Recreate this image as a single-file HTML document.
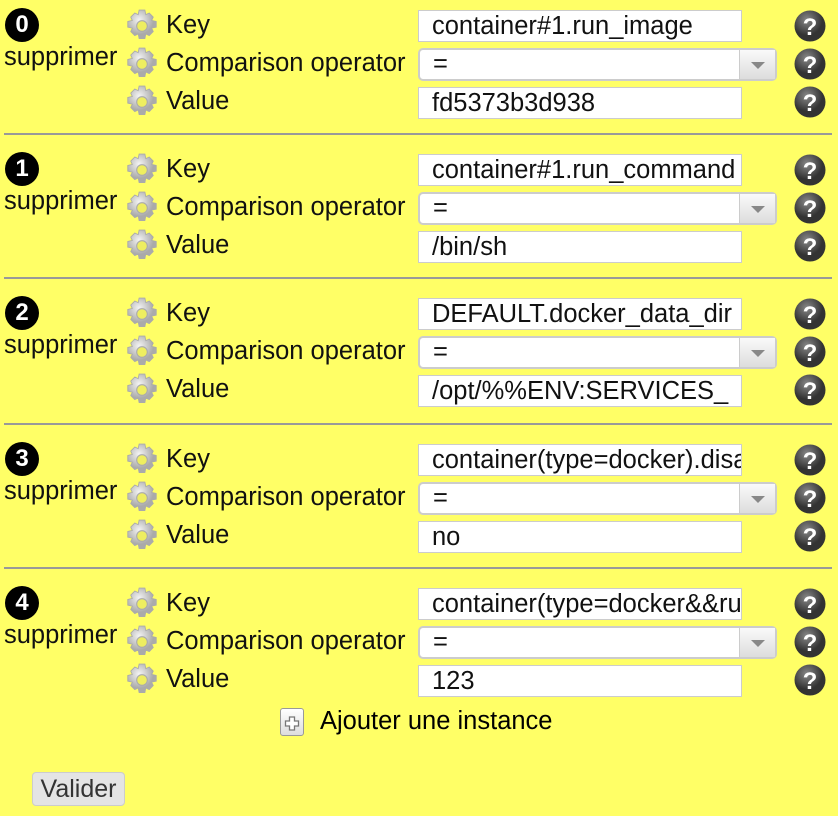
<!DOCTYPE html>
<html><head><meta charset="utf-8"><style>
body{margin:0;width:838px;height:816px;background:#ffff66;font-family:"Liberation Sans",Arial,sans-serif;position:relative;overflow:hidden;color:#111}
.a{position:absolute}
.num{width:34px;height:34px;border-radius:50%;background:#000;color:#fff;font-weight:bold;font-size:24px;text-align:center;line-height:34px;left:5px}
.sup{left:4px;font-size:25.5px}
.lbl{left:166px;font-size:25.5px;line-height:30px}
.inp{left:418px;width:324px;height:32px;background:#fff;border:1px solid #ccc;font-size:25.5px;line-height:31px;padding-left:13px;box-sizing:border-box;white-space:nowrap;overflow:hidden}
.sel{left:418px;width:359px;height:33px;background:#fff;border:2px solid #ccc;border-radius:5px;box-sizing:border-box;font-size:25.5px;line-height:28px;padding-left:13px}
.sel:after{content:"";position:absolute;right:0;top:0;width:35px;height:29px;border-left:1px solid #ccc;background:linear-gradient(#fafafa,#ddd)}
.sel i{position:absolute;right:10px;top:12px;width:0;height:0;border-left:7px solid transparent;border-right:7px solid transparent;border-top:7px solid #888;z-index:2}
.hr{left:4px;width:828px;height:2px;background:#999}
.g{left:125px;width:34px;height:34px}
.h{left:794px;width:32px;height:32px}
</style></head><body>
<svg width="0" height="0" style="position:absolute"><defs>
<radialGradient id="gg" cx="40%" cy="35%"><stop offset="0" stop-color="#f4f4f4"/><stop offset="1" stop-color="#aaa"/></radialGradient>
<radialGradient id="hg" cx="40%" cy="30%"><stop offset="0" stop-color="#888"/><stop offset="1" stop-color="#333"/></radialGradient>
<symbol id="gear" viewBox="0 0 32 32"><g fill="url(#gg)" stroke="#aaa" stroke-width=".8"><path d="M13.3 1h5.4l.9 4.3 3.2-1.5 3.8 3.8-1.5 3.2 4.3.9v5.4l-4.3.9 1.5 3.2-3.8 3.8-3.2-1.5-.9 4.3h-5.4l-.9-4.3-3.2 1.5-3.8-3.8 1.5-3.2-4.3-.9v-5.4l4.3-.9-1.5-3.2 3.8-3.8 3.2 1.5z"/></g><circle cx="16" cy="16" r="5" fill="#eeee60" stroke="#aaa"/></symbol>
<symbol id="help" viewBox="0 0 32 32"><circle cx="16" cy="16" r="15.5" fill="url(#hg)"/><text x="16" y="25" text-anchor="middle" font-family="Liberation Sans" font-weight="bold" font-size="24" fill="#fff">?</text></symbol>
</defs></svg>

<div class="a num" style="top:8px">0</div><div class="a sup" style="top:43px">supprimer</div>
<svg class="a g" style="top:9px"><use href="#gear"/></svg><svg class="a g" style="top:47px"><use href="#gear"/></svg><svg class="a g" style="top:85px"><use href="#gear"/></svg>
<div class="a lbl" style="top:10px">Key</div><div class="a lbl" style="top:48px">Comparison operator</div><div class="a lbl" style="top:86px">Value</div>
<div class="a inp" style="top:10px">container#1.run_image</div><div class="a sel" style="top:48px">=<i></i></div><div class="a inp" style="top:87px">fd5373b3d938</div>
<svg class="a h" style="top:10px"><use href="#help"/></svg><svg class="a h" style="top:48px"><use href="#help"/></svg><svg class="a h" style="top:86px"><use href="#help"/></svg>
<div class="a hr" style="top:133px"></div>

<div class="a num" style="top:152px">1</div><div class="a sup" style="top:187px">supprimer</div>
<svg class="a g" style="top:153px"><use href="#gear"/></svg><svg class="a g" style="top:191px"><use href="#gear"/></svg><svg class="a g" style="top:229px"><use href="#gear"/></svg>
<div class="a lbl" style="top:154px">Key</div><div class="a lbl" style="top:192px">Comparison operator</div><div class="a lbl" style="top:230px">Value</div>
<div class="a inp" style="top:154px">container#1.run_command</div><div class="a sel" style="top:192px">=<i></i></div><div class="a inp" style="top:231px">/bin/sh</div>
<svg class="a h" style="top:154px"><use href="#help"/></svg><svg class="a h" style="top:192px"><use href="#help"/></svg><svg class="a h" style="top:230px"><use href="#help"/></svg>
<div class="a hr" style="top:277px"></div>

<div class="a num" style="top:296px">2</div><div class="a sup" style="top:331px">supprimer</div>
<svg class="a g" style="top:297px"><use href="#gear"/></svg><svg class="a g" style="top:335px"><use href="#gear"/></svg><svg class="a g" style="top:373px"><use href="#gear"/></svg>
<div class="a lbl" style="top:298px">Key</div><div class="a lbl" style="top:336px">Comparison operator</div><div class="a lbl" style="top:374px">Value</div>
<div class="a inp" style="top:298px">DEFAULT.docker_data_dir</div><div class="a sel" style="top:336px">=<i></i></div><div class="a inp" style="top:375px">/opt/%%ENV:SERVICES_</div>
<svg class="a h" style="top:298px"><use href="#help"/></svg><svg class="a h" style="top:336px"><use href="#help"/></svg><svg class="a h" style="top:374px"><use href="#help"/></svg>
<div class="a hr" style="top:423px"></div>

<div class="a num" style="top:442px">3</div><div class="a sup" style="top:477px">supprimer</div>
<svg class="a g" style="top:443px"><use href="#gear"/></svg><svg class="a g" style="top:481px"><use href="#gear"/></svg><svg class="a g" style="top:519px"><use href="#gear"/></svg>
<div class="a lbl" style="top:444px">Key</div><div class="a lbl" style="top:482px">Comparison operator</div><div class="a lbl" style="top:520px">Value</div>
<div class="a inp" style="top:444px">container(type=docker).disable</div><div class="a sel" style="top:482px">=<i></i></div><div class="a inp" style="top:521px">no</div>
<svg class="a h" style="top:444px"><use href="#help"/></svg><svg class="a h" style="top:482px"><use href="#help"/></svg><svg class="a h" style="top:520px"><use href="#help"/></svg>
<div class="a hr" style="top:567px"></div>

<div class="a num" style="top:586px">4</div><div class="a sup" style="top:621px">supprimer</div>
<svg class="a g" style="top:587px"><use href="#gear"/></svg><svg class="a g" style="top:625px"><use href="#gear"/></svg><svg class="a g" style="top:663px"><use href="#gear"/></svg>
<div class="a lbl" style="top:588px">Key</div><div class="a lbl" style="top:626px">Comparison operator</div><div class="a lbl" style="top:664px">Value</div>
<div class="a inp" style="top:588px">container(type=docker&amp;&amp;run</div><div class="a sel" style="top:626px">=<i></i></div><div class="a inp" style="top:665px">123</div>
<svg class="a h" style="top:588px"><use href="#help"/></svg><svg class="a h" style="top:626px"><use href="#help"/></svg><svg class="a h" style="top:664px"><use href="#help"/></svg>

<div class="a" style="left:280px;top:708px;width:24px;height:28px;border:1px solid #999;border-radius:3px;background:linear-gradient(#fff,#ddd);box-sizing:border-box">
<svg width="22" height="26" style="position:absolute;left:0;top:0"><path d="M8.5 8h5v4h4v5h-4v4h-5v-4h-4v-5h4z" fill="#fff" stroke="#777" stroke-width="1.3"/></svg></div>
<div class="a" style="left:320px;top:707px;font-size:25.5px;color:#000">Ajouter une instance</div>

<div class="a" style="left:32px;top:772px;width:93px;height:34px;background:#e4e4e4;border:1px solid #ccc;border-radius:4px;box-sizing:border-box;font-size:25px;line-height:32px;text-align:center;color:#333">Valider</div>
</body></html>
